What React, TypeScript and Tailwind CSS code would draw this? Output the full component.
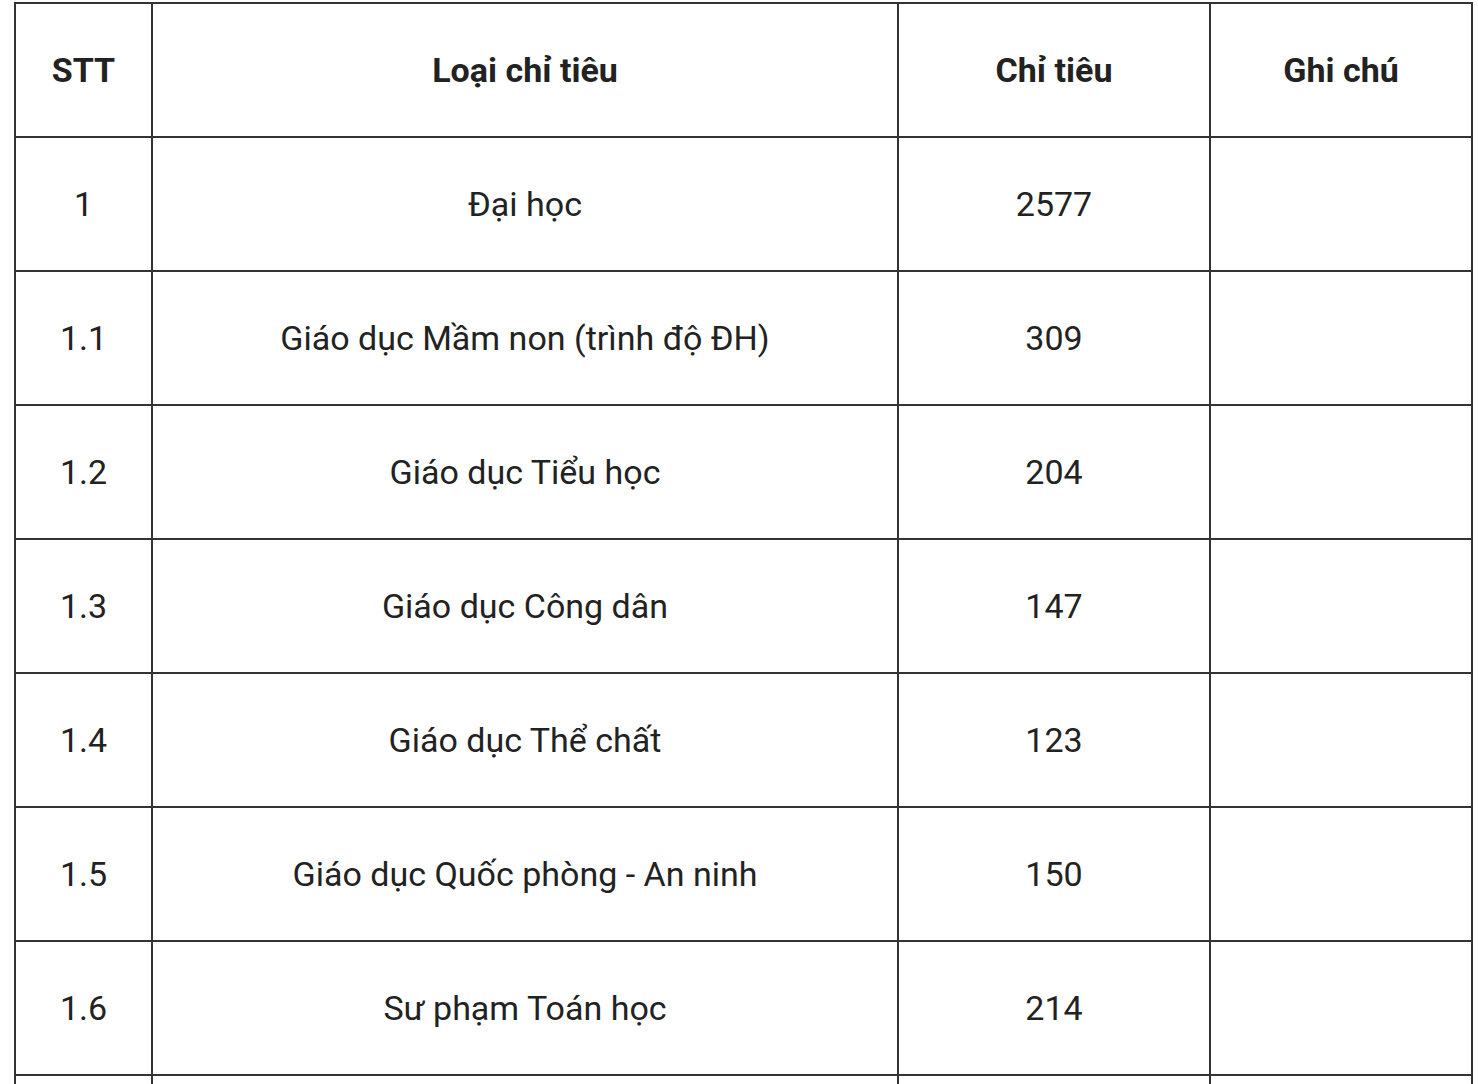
const rows: [string, string, string][] = [
  ["1", "Đại học", "2577"],
  ["1.1", "Giáo dục Mầm non (trình độ ĐH)", "309"],
  ["1.2", "Giáo dục Tiểu học", "204"],
  ["1.3", "Giáo dục Công dân", "147"],
  ["1.4", "Giáo dục Thể chất", "123"],
  ["1.5", "Giáo dục Quốc phòng - An ninh", "150"],
  ["1.6", "Sư phạm Toán học", "214"],
  ["", "", ""],
];

export default function App() {
  return (
    <div className="min-h-screen bg-white pt-[2px] pl-[14px] text-[#222]" style={{ fontFamily: "Roboto, 'Noto Sans', sans-serif" }}>
      <table className="border-collapse table-fixed w-[1459px]">
        <colgroup>
          <col className="w-[137px]" />
          <col className="w-[746px]" />
          <col className="w-[312px]" />
          <col />
        </colgroup>
        <thead>
          <tr className="h-[134px]">
            <th className="border-2 border-[#333] text-[34px] font-bold text-center">STT</th>
            <th className="border-2 border-[#333] text-[34px] font-bold text-center">Loại chỉ tiêu</th>
            <th className="border-2 border-[#333] text-[34px] font-bold text-center">Chỉ tiêu</th>
            <th className="border-2 border-[#333] text-[34px] font-bold text-center">Ghi chú</th>
          </tr>
        </thead>
        <tbody>
          {rows.map((r, i) => (
            <tr key={i} className="h-[134px]">
              <td className="border-2 border-[#333] text-[34px] text-center">{r[0]}</td>
              <td className="border-2 border-[#333] text-[34px] text-center">{r[1]}</td>
              <td className="border-2 border-[#333] text-[34px] text-center">{r[2]}</td>
              <td className="border-2 border-[#333] text-[34px] text-center"></td>
            </tr>
          ))}
        </tbody>
      </table>
    </div>
  );
}
